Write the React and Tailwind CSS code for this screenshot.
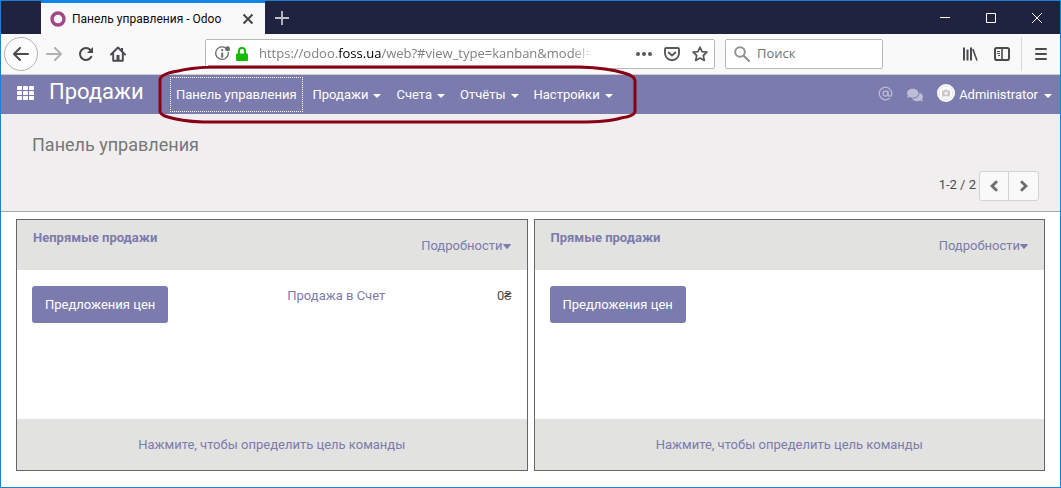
import React from "react";
import { FaComments } from "react-icons/fa";
import { AtSign } from "lucide-react";

const system = "font-['Open_Sans','Noto_Sans',sans-serif]";

function Caret({ className = "" }) {
  return (
    <svg viewBox="0 0 8 4" className={`h-1 w-2 shrink-0 ${className}`} fill="currentColor" aria-hidden="true">
      <path d="M0 0h8L4 4z" />
    </svg>
  );
}

function TabStrip() {
  return (
    <div className="flex h-[33px] items-stretch bg-[#202340]">
      <div className="ml-10 flex w-56 items-center border-t-2 border-[#0a84ff] bg-[#f9f9fa] pr-[11px] pl-[9px]">
        <svg viewBox="0 0 16 16" className="size-4 shrink-0" fill="none" aria-hidden="true">
          <circle cx="8" cy="8" r="6" stroke="#a24689" strokeWidth="3.4" />
        </svg>
        <span className="ml-[6px] flex-1 text-xs whitespace-nowrap text-[#0c0c0d]">Панель управления - Odoo</span>
        <button aria-label="Закрыть вкладку" className="text-[#444]">
          <svg viewBox="0 0 12 12" className="size-3" fill="none" stroke="currentColor" strokeWidth="1.9" aria-hidden="true">
            <path d="M1.5 1.5l9 9M10.500 1.500l-9 9" />
          </svg>
        </button>
      </div>
      <button aria-label="Новая вкладка" className="ml-[9px] text-[#c0c0ca]">
        <svg viewBox="0 0 16 16" className="size-4" fill="none" stroke="currentColor" strokeWidth="1.8" aria-hidden="true">
          <path d="M8 1v14M1 8h14" />
        </svg>
      </button>
      <div className="ml-auto flex items-center text-white">
        <button aria-label="Свернуть" className="flex w-[46px] justify-center">
          <svg viewBox="0 0 10 10" className="size-[10px]" stroke="currentColor" aria-hidden="true"><path d="M0 4.500h10" /></svg>
        </button>
        <button aria-label="Развернуть" className="flex w-[46px] justify-center">
          <svg viewBox="0 0 10 10" className="size-[10px]" fill="none" stroke="currentColor" aria-hidden="true"><path d="M.5.5h9v9h-9z" /></svg>
        </button>
        <button aria-label="Закрыть" className="flex w-[46px] justify-center">
          <svg viewBox="0 0 10 10" className="size-[10px]" stroke="currentColor" aria-hidden="true"><path d="M0 0l10 10M10 0L0 10" /></svg>
        </button>
      </div>
    </div>
  );
}

function Toolbar() {
  return (
    <div className="flex h-[41px] items-center border-b border-[#ccc] bg-[#f9f9fa] pl-[3px] text-[#4a4a4f]">
      <button aria-label="Назад" className="flex size-[34px] items-center justify-center rounded-full border border-[#b1b1b3] bg-[#fdfdfd]">
        <svg viewBox="0 0 16 16" className="size-4" fill="none" stroke="currentColor" strokeWidth="2" strokeLinecap="round" strokeLinejoin="round" aria-hidden="true">
          <path d="M15 8H1.500M7 2L1 8l6 6" />
        </svg>
      </button>
      <button aria-label="Вперёд" className="ml-2 text-[#b1b1b3]">
        <svg viewBox="0 0 16 16" className="size-4" fill="none" stroke="currentColor" strokeWidth="2" strokeLinecap="round" strokeLinejoin="round" aria-hidden="true">
          <path d="M1 8h13.500M9 2l6 6-6 6" />
        </svg>
      </button>
      <button aria-label="Обновить" className="ml-4">
        <svg viewBox="0 0 16 16" className="size-4" fill="none" aria-hidden="true">
          <path d="M13.300 10.800A6 6 0 1 1 12.500 4" stroke="currentColor" strokeWidth="2" strokeLinecap="round" />
          <path d="M15 1v6H9z" fill="currentColor" />
        </svg>
      </button>
      <button aria-label="Домой" className="ml-4">
        <svg viewBox="0 0 16 16" className="size-4" fill="none" aria-hidden="true">
          <path d="M1 8.500L8 1.500l7 7M3.200 7.500v7.300h9.600V7.500" stroke="currentColor" strokeWidth="1.900" strokeLinecap="round" strokeLinejoin="round" />
          <path d="M6.500 9h3v6h-3zM11 2h2v4l-2-2z" fill="currentColor" />
        </svg>
      </button>
      <div className="ml-[79px] flex h-[30px] w-[510px] shrink-0 items-center rounded-[2px] border border-[#b9b9bb] bg-white pr-[6px] pl-[9px]">
        <svg viewBox="0 0 16 16" className="size-4 shrink-0" fill="none" stroke="#6b6b6f" aria-hidden="true">
          <path d="M10.500 1.900A6.300 6.300 0 1 0 13.200 6" strokeWidth="1.300" />
          <path d="M7.200 6.600v5" strokeWidth="2" />
          <circle cx="7.200" cy="4.200" r="1.100" fill="#6b6b6f" stroke="none" />
          <circle cx="12.500" cy="2.700" r="2.500" fill="#6b6b6f" stroke="none" />
        </svg>
        <svg viewBox="0 0 12 14" className="ml-[5px] h-[14px] w-3 shrink-0" fill="#12bc00" aria-hidden="true">
          <path d="M1 6.500h10q1 0 1 1V13q0 1-1 1H1q-1 0-1-1V7.500q0-1 1-1z" />
          <path d="M2.900 7V4.200a3.100 3.100 0 0 1 6.200 0V7" fill="none" stroke="#12bc00" strokeWidth="2" />
        </svg>
        <div className={`ml-[11px] shrink-0 mask-r-from-94% text-[13px] whitespace-nowrap text-[#808085] ${system}`}>
          https://odoo.<span className="text-black">foss.ua</span>/web?#view_type=kanban&amp;model=
        </div>
        <div className="ml-auto flex items-center gap-3 text-[#58585c]">
          <button aria-label="Действия">
            <svg viewBox="0 0 16 16" className="size-4" fill="currentColor" aria-hidden="true">
              <circle cx="2" cy="8" r="2" /><circle cx="8" cy="8" r="2" /><circle cx="14" cy="8" r="2" />
            </svg>
          </button>
          <button aria-label="Сохранить в Pocket">
            <svg viewBox="0 0 16 16" className="size-4" fill="none" stroke="currentColor" strokeWidth="1.900" strokeLinecap="round" strokeLinejoin="round" aria-hidden="true">
              <path d="M2.200 2h11.600q1.200 0 1.200 1.200v4a7 7 0 0 1-14 0v-4Q1 2 2.200 2z" /><path d="M4.700 6.500L8 9.600l3.300-3.100" />
            </svg>
          </button>
          <button aria-label="Добавить закладку">
            <svg viewBox="0 0 16 16" className="size-4" fill="none" stroke="currentColor" strokeWidth="1.700" strokeLinejoin="round" aria-hidden="true">
              <path d="M8 1.200l2 4.400 4.900.6-3.600 3.300 1 4.900L8 12l-4.300 2.400 1-4.900L1.100 6.200 6 5.600z" />
            </svg>
          </button>
        </div>
      </div>
      <label className="ml-[10px] flex h-[30px] w-[158px] shrink-0 items-center rounded-[2px] border border-[#b9b9bb] bg-white pl-2">
        <svg viewBox="0 0 16 16" className="size-4 shrink-0" fill="none" stroke="#929296" strokeWidth="2" strokeLinecap="round" aria-hidden="true">
          <circle cx="6" cy="6" r="4.800" /><path d="M9.700 9.700l5.300 5.300" />
        </svg>
        <input aria-label="Поиск" placeholder="Поиск" className={`ml-[7px] w-full min-w-0 text-[13px] outline-none placeholder:text-[#737373] ${system}`} />
      </label>
      <div className="ml-auto flex items-center">
        <button aria-label="Библиотека">
          <svg viewBox="0 0 16 16" className="size-4" fill="none" stroke="currentColor" strokeWidth="2" aria-hidden="true">
            <path d="M2 1.500v13M5.500 3.500v11M9 1.500v13" /><path d="M10.800 3l4.200 11.500" strokeWidth="1.600" />
          </svg>
        </button>
        <button aria-label="Боковая панель" className="ml-4">
          <svg viewBox="0 0 16 16" className="size-4" fill="none" stroke="currentColor" aria-hidden="true">
            <rect x="1" y="2" width="14" height="12" rx="1.800" strokeWidth="2" /><path d="M8 2v12" strokeWidth="1.600" /><path d="M3 5.500h3M3 7.500h3M4 9.500h2" />
          </svg>
        </button>
        <div className="ml-[11px] h-[34px] w-px bg-[#d7d7db]" />
        <button aria-label="Меню" className="mr-[11px] ml-[11px]">
          <svg viewBox="0 0 16 16" className="size-4" fill="none" stroke="currentColor" strokeWidth="2" strokeLinecap="round" aria-hidden="true">
            <path d="M3 3h10M3 8h10M3 13h10" />
          </svg>
        </button>
      </div>
    </div>
  );
}

function HighlightRing() {
  return (
    <svg viewBox="0 0 480 60" className="pointer-events-none absolute -top-[13px] -left-3 h-[60px] w-[480px]" fill="none" stroke="#880015" strokeWidth="3" aria-hidden="true">
      <path d="M50 3H422Q450 4 466 9Q477 12 477 17V47Q477 52 463 54Q450 58 422 58H45Q22 57 10 53Q2 51 2 47V16Q2 10 20 7Q32 4 52 3z" />
    </svg>
  );
}

function AppNav() {
  return (
    <nav className="flex h-[39px] items-center bg-[#7c7bad] text-[13px] leading-5 text-white">
      <button aria-label="Приложения" className="ml-4 pb-[3px]">
        <svg viewBox="0 0 17 14" className="h-[14px] w-[17px]" fill="currentColor" aria-hidden="true">
          {[0, 6, 12].map((x) => [0, 5, 10].map((y) => <rect key={`${x}-${y}`} x={x} y={y} width="5" height="4" rx="0.800" />))}
        </svg>
      </button>
      <span className="ml-[15px] w-[110px] pb-[5px] text-[22px] leading-7 whitespace-nowrap">Продажи</span>
      <div className="relative ml-[11px] flex items-center whitespace-nowrap">
        <a href="#dashboard" className="flex h-[35px] items-center border border-dotted border-white px-[5px]">Панель управления</a>
        {["Продажи", "Счета", "Отчёты", "Настройки"].map((name, i) => (
          <button key={name} className={`flex items-center gap-[5px] ${i ? "ml-[15px]" : "ml-[10px]"}`}>
            {name}
            <Caret className="mt-[3px]" />
          </button>
        ))}
        <HighlightRing />
      </div>
      <div className="mr-2 ml-auto flex items-center">
        <button aria-label="Упоминания" className="text-[#bdbdd8]"><AtSign className="mb-[2px] size-[15px]" strokeWidth={2} /></button>
        <button aria-label="Сообщения" className="ml-[14px] text-[#bdbdd8]"><FaComments className="size-4" /></button>
        <button className="ml-[14px] flex items-center">
          <svg viewBox="0 0 18 18" className="mb-[3px] size-[18px]" aria-hidden="true">
            <circle cx="9" cy="9" r="9" fill="#fff" />
            <circle cx="9" cy="9" r="7" fill="none" stroke="#e4e4e4" />
            <path d="M5 6.500h2L8 5.500h2l1 1h2v6H5z" fill="#c9c9c9" />
            <circle cx="9" cy="9.300" r="1.700" fill="#eee" />
          </svg>
          <span className="ml-1">Administrator</span>
          <Caret className="mt-[3px] ml-[6px]" />
        </button>
      </div>
    </nav>
  );
}

function ControlPanel() {
  return (
    <header className="h-[98px] border-b border-[#a8a8a8] bg-[#f0eeee] pr-[21px] pl-[31px]">
      <h1 className="pt-[19px] text-lg leading-6 text-[#777]">Панель управления</h1>
      <div className="mt-[14px] flex items-center justify-end text-[13px] text-[#4c4c4c]">
        <span className="mr-[3px] pb-[3px]">1-2 / 2</span>
        {["prev", "next"].map((dir) => (
          <button
            key={dir}
            aria-label={dir === "prev" ? "Назад" : "Далее"}
            className={`flex h-[30px] items-center justify-center border border-[#d3d3d3] bg-[#f9f9f9] text-[#6c6c6c] ${dir === "prev" ? "w-[30px] rounded-l-[3px]" : "-ml-px w-[31px] rounded-r-[3px]"}`}
          >
            <svg viewBox="0 0 10 12" className="h-3 w-[10px]" fill="none" stroke="currentColor" strokeWidth="2.800" aria-hidden="true">
              <path d={dir === "prev" ? "M8 1.200L3 6l5 4.800" : "M2 1.200L7 6l-5 4.800"} />
            </svg>
          </button>
        ))}
      </div>
    </header>
  );
}

function TeamCard({ title, children }) {
  return (
    <section className="flex h-[252px] min-w-0 flex-1 flex-col border border-[#666] text-[13px] leading-5">
      <div className="flex h-[50px] justify-between bg-[#e2e2e0] px-4 text-[#7c7bad]">
        <h2 className="pt-2 font-bold">{title}</h2>
        <button className="mt-4 flex h-5 items-center">
          Подробности
          <svg viewBox="0 0 8 5" className="h-[5px] w-2" fill="currentColor" aria-hidden="true">
            <path d="M.4 0h7.200q.5.300.2.700L4.400 4.700q-.4.400-.8 0L.200.700Q-.1.300.4 0z" />
          </svg>
        </button>
      </div>
      <div className="flex flex-1 items-start px-[15px] pt-4">
        <button className="h-[37px] rounded-[3px] bg-[#7c7bad] px-[13px] text-white">Предложения цен</button>
        {children}
      </div>
      <div className="flex h-[51px] items-center justify-center bg-[#e2e2e0]">
        <a href="#target" className="text-[#7c7bad]">Нажмите, чтобы определить цель команды</a>
      </div>
    </section>
  );
}

export default function App() {
  return (
    <div className="min-h-screen border border-[#1883d7] bg-white font-[Roboto,sans-serif]">
      <TabStrip />
      <Toolbar />
      <AppNav />
      <ControlPanel />
      <main className="flex gap-[6px] px-[15px] py-[7px]">
        <TeamCard title="Непрямые продажи">
          <a href="#invoices" className="ml-[119px] text-[#7c7bad]">Продажа в Счет</a>
          <span className="ml-auto text-[#4c4c4c]">0₴</span>
        </TeamCard>
        <TeamCard title="Прямые продажи" />
      </main>
    </div>
  );
}
